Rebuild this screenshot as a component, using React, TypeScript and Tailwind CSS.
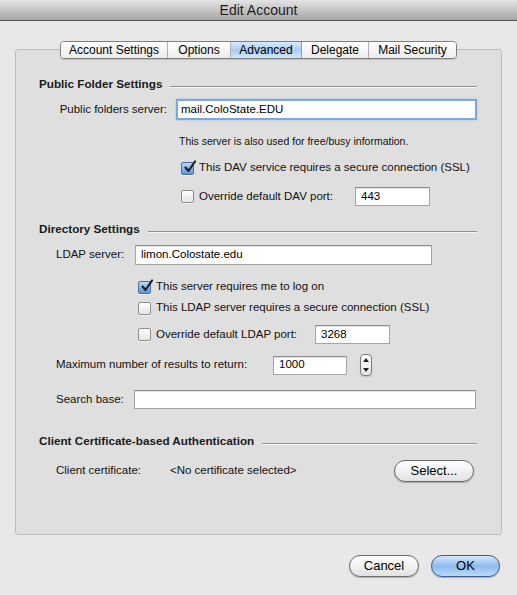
import React from "react";

const font = { fontFamily: '"Lucida Grande", "Liberation Sans", Arial, sans-serif' };

function Checkbox({ checked }: { checked?: boolean }) {
  if (checked) {
    return (
      <span className="relative flex h-[13px] w-[13px] shrink-0 items-center justify-center rounded-[2px] border border-[#4a6f9a] bg-gradient-to-b from-[#bcd7f5] to-[#5b97dc] shadow-[0_1px_0_rgba(255,255,255,0.6)]">
        <svg width="14" height="14" viewBox="0 0 14 14" className="absolute -top-[3px] left-[1px]">
          <path d="M2.5 7.5 L5.5 11 L12 1.5" fill="none" stroke="#1a1f2b" strokeWidth="2.2" strokeLinecap="round" strokeLinejoin="round" />
        </svg>
      </span>
    );
  }
  return (
    <span className="h-[13px] w-[13px] shrink-0 rounded-[2px] border border-[#8d8d8d] bg-gradient-to-b from-[#ffffff] to-[#e4e4e4] shadow-[0_1px_0_rgba(255,255,255,0.6)]" />
  );
}

function Field({ value, w, h = 19, focus }: { value?: string; w: number; h?: number; focus?: boolean }) {
  return (
    <div
      className={
        focus
          ? "flex shrink-0 items-center border-2 border-[#7ea8d9] bg-white pl-[3px] text-[11.5px] text-black shadow-[0_0_2px_#9cc0ea]"
          : "flex shrink-0 items-center border border-[#a5a5a5] border-t-[#8c8c8c] bg-white pl-[5px] text-[11.5px] text-black shadow-[inset_0_1px_1px_rgba(0,0,0,0.12)]"
      }
      style={{ width: w, height: h }}
    >
      {value}
    </div>
  );
}

function Heading({ children }: { children: React.ReactNode }) {
  return (
    <div className="flex h-[15px] items-center gap-[8px]">
      <span className="whitespace-nowrap text-[11.7px] font-bold leading-[15px] text-[#1a1a1a]">{children}</span>
      <div className="mt-[7px] h-[2px] flex-1 border-t border-b border-t-[#8f8f8f] border-b-[#f6f6f6]" />
    </div>
  );
}

function PillButton({ label, w, primary }: { label: string; w: number; primary?: boolean }) {
  return (
    <div
      className={
        primary
          ? "flex h-[22px] items-center justify-center rounded-full border border-[#3b5f92] bg-gradient-to-b from-[#d6e9fb] via-[#8cbcee] to-[#b9dafa] text-[13px] text-black shadow-[0_1px_1px_rgba(0,0,0,0.25)]"
          : "flex h-[22px] items-center justify-center rounded-full border border-[#6b6b6b] bg-gradient-to-b from-[#ffffff] via-[#f1f1f1] to-[#e2e2e2] text-[13px] text-black shadow-[0_1px_1px_rgba(0,0,0,0.25)]"
      }
      style={{ width: w }}
    >
      {label}
    </div>
  );
}

const tabs = ["Account Settings", "Options", "Advanced", "Delegate", "Mail Security"];
const tabWidths = [107, 63, 71, 67, 87];

export default function App() {
  return (
    <div className="flex h-[595px] w-[517px] flex-col bg-[#e8e8e8] text-[#111]" style={font}>
      {/* title bar */}
      <div className="flex h-[21px] items-center justify-center border-b border-[#505050] bg-gradient-to-b from-[#e4e4e4] to-[#a6a6a6] text-[14px] text-[#1c1c1c]">
        Edit Account
      </div>

      {/* tabs */}
      <div className="relative z-10 mt-[20px] ml-[60px] flex h-[18px] w-fit overflow-hidden rounded-[4px] border border-[#7f7f7f] shadow-[0_1px_1px_rgba(0,0,0,0.15)]">
        {tabs.map((t, i) => (
          <div
            key={t}
            className={
              i === 2
                ? "flex items-center justify-center border-r border-[#8c9fb6] bg-gradient-to-b from-[#d9ebfd] via-[#a7cdf5] to-[#d3e8fd] text-[12px] text-black"
                : i === tabs.length - 1
                ? "flex items-center justify-center bg-gradient-to-b from-[#ffffff] to-[#ececec] text-[12px] text-black"
                : "flex items-center justify-center border-r border-[#b0b0b0] bg-gradient-to-b from-[#ffffff] to-[#ececec] text-[12px] text-black"
            }
            style={{ width: tabWidths[i] }}
          >
            {t}
          </div>
        ))}
      </div>

      {/* panel */}
      <div className="-mt-[10px] ml-[15px] flex h-[486px] w-[487px] flex-col whitespace-nowrap rounded-[3px] border border-[#bcbcbc] bg-[#dfdfdf] pt-[26px] pl-[23px] pr-[24px] text-[11.5px]">
        <Heading>Public Folder Settings</Heading>

        <div className="mt-[8px] flex h-[21px] items-center">
          <div className="w-[128px] text-right">Public folders server:</div>
          <div className="ml-[9px]">
            <Field value="mail.ColoState.EDU" w={301} h={21} focus />
          </div>
        </div>

        <div className="mt-[14px] ml-[140px] h-[14px] text-[10.5px] leading-[14px]">
          This server is also used for free/busy information.
        </div>

        <div className="mt-[12px] ml-[142px] flex h-[16px] items-center gap-[5px]">
          <Checkbox checked />
          <span>This DAV service requires a secure connection (SSL)</span>
        </div>

        <div className="mt-[11px] ml-[142px] flex h-[19px] items-center">
          <Checkbox />
          <span className="ml-[5px] w-[156px]">Override default DAV port:</span>
          <Field value="443" w={75} />
        </div>

        <div className="mt-[15px]">
          <Heading>Directory Settings</Heading>
        </div>

        <div className="mt-[9px] ml-[17px] flex h-[20px] items-center">
          <span className="w-[79px]">LDAP server:</span>
          <Field value="limon.Colostate.edu" w={297} h={20} />
        </div>

        <div className="mt-[14px] ml-[99px] flex h-[16px] items-center gap-[5px]">
          <Checkbox checked />
          <span>This server requires me to log on</span>
        </div>

        <div className="mt-[5px] ml-[99px] flex h-[16px] items-center gap-[5px]">
          <Checkbox />
          <span>This LDAP server requires a secure connection (SSL)</span>
        </div>

        <div className="mt-[9px] ml-[99px] flex h-[19px] items-center">
          <Checkbox />
          <span className="ml-[5px] w-[159px]">Override default LDAP port:</span>
          <Field value="3268" w={75} />
        </div>

        <div className="mt-[10px] ml-[17px] flex h-[22px] items-center">
          <span className="w-[217px]">Maximum number of results to return:</span>
          <Field value="1000" w={74} />
          <div className="ml-[13px] flex h-[22px] w-[12px] flex-col items-center justify-between rounded-[4px] border border-[#7a7a7a] bg-gradient-to-b from-[#ffffff] to-[#e6e6e6] py-[3px] shadow-[0_1px_1px_rgba(0,0,0,0.15)]">
            <svg width="6" height="4" viewBox="0 0 6 4"><path d="M3 0 L6 4 L0 4 Z" fill="#222" /></svg>
            <svg width="6" height="4" viewBox="0 0 6 4"><path d="M0 0 L6 0 L3 4 Z" fill="#222" /></svg>
          </div>
        </div>

        <div className="mt-[14px] ml-[17px] flex h-[19px] items-center">
          <span className="w-[78px]">Search base:</span>
          <Field w={342} />
        </div>

        <div className="mt-[24px]">
          <Heading>Client Certificate-based Authentication</Heading>
        </div>

        <div className="mt-[11px] ml-[17px] flex h-[23px] items-center">
          <span className="w-[114px]">Client certificate:</span>
          <span className="w-[224px]">&lt;No certificate selected&gt;</span>
          <PillButton label="Select..." w={80} />
        </div>
      </div>

      {/* bottom buttons */}
      <div className="mt-[20px] flex justify-end gap-[12px] pr-[17px]">
        <PillButton label="Cancel" w={70} />
        <PillButton label="OK" w={69} primary />
      </div>
    </div>
  );
}
